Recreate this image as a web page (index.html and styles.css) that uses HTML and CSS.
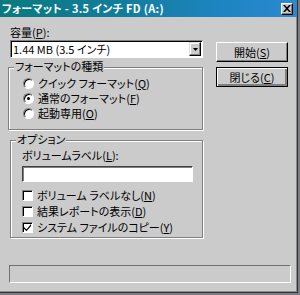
FILE: index.html
```html
<!doctype html>
<html>
<head>
<meta charset="utf-8">
<link rel="stylesheet" href="styles.css">
<title>フォーマット</title>
</head>
<body>
<div class="window">
  <div class="titlebar">
    <span class="title">フォーマット - 3.5 インチ FD (A:)</span>
    <span class="close">
      <svg width="8" height="7" viewBox="0 0 8 7"><path d="M0 0h2l2 2.2L6 0h2L5 3.5 8 7H6L4 4.8 2 7H0l3-3.5z" fill="#000"/></svg>
    </span>
  </div>
  <div class="content">
    <div class="main">
      <div class="left">
        <div class="label">容量(<u>P</u>):</div>
        <div class="combo">
          <span class="combo-text">1.44 MB (3.5 インチ)</span>
          <span class="drop"><svg width="5" height="3" viewBox="0 0 5 3"><path d="M0 0h5L2.5 3z" fill="#000"/></svg></span>
        </div>
        <div class="group type">
          <span class="group-title">フォーマットの種類</span>
          <div class="row"><span class="radio"></span>クイック フォーマット(<u>Q</u>)</div>
          <div class="row"><span class="radio on"></span>通常のフォーマット(<u>F</u>)</div>
          <div class="row"><span class="radio"></span>起動専用(<u>O</u>)</div>
        </div>
        <div class="group options">
          <span class="group-title">オプション</span>
          <div class="row plain">ボリュームラベル(<u>L</u>):</div>
          <div class="field"></div>
          <div class="checks">
            <div class="row"><span class="check"></span>ボリューム ラベルなし(<u>N</u>)</div>
            <div class="row"><span class="check"></span>結果レポートの表示(<u>D</u>)</div>
            <div class="row"><span class="check"><svg width="7" height="7" viewBox="0 0 7 7"><path d="M0 3l2.5 2.5L7 0v2L2.5 7.2 0 4.8z" fill="#000"/></svg></span>システム ファイルのコピー(<u>Y</u>)</div>
          </div>
        </div>
      </div>
      <div class="buttons">
        <div class="btn">開始(<u>S</u>)</div>
        <div class="btn default">閉じる(<u>C</u>)</div>
      </div>
    </div>
    <div class="status"></div>
  </div>
</div>
</body>
</html>
```

FILE: styles.css
```css
html,
body {
    margin: 0;
    padding: 0;
}
body {
    width: 300px;
    height: 295px;
    background: #7c7c84;
    font-family: "Noto Sans CJK JP", "Noto Sans", sans-serif;
    font-size: 11px;
    font-feature-settings: "palt";
    color: #000;
    overflow: hidden;
}
u {
    text-underline-offset: 1px;
}
.window {
    width: 297px;
    height: 292px;
    background: #cbcbcb;
    border-right: 1px solid #333;
    border-bottom: 1px solid #333;
    box-shadow: inset -1px -1px 0 #8a8a8a;
    display: flex;
    flex-direction: column;
}

/* title bar */
.titlebar {
    height: 17px;
    flex: none;
    display: flex;
    align-items: center;
    justify-content: space-between;
    padding: 0 4px 0 2px;
    background: linear-gradient(90deg, #087a7e 0%, #127c9c 40%, #1f84c2 75%, #2a8ad0 100%);
}
.title {
    color: #fff;
    font-weight: bold;
    font-size: 11px;
    letter-spacing: 0.3px;
    line-height: 17px;
    white-space: nowrap;
}
.close {
    width: 12px;
    height: 12px;
    box-sizing: border-box;
    background: #cbcbcb;
    border-top: 1px solid #fff;
    border-left: 1px solid #fff;
    border-right: 1px solid #000;
    border-bottom: 1px solid #000;
    box-shadow: inset -1px -1px 0 #808080;
    display: flex;
    align-items: center;
    justify-content: center;
}

/* body */
.content {
    flex: 1;
    display: flex;
    flex-direction: column;
    padding: 9px 0 9px 9px;
}
.main {
    display: flex;
}
.left {
    width: 194px;
    display: flex;
    flex-direction: column;
}
.label {
    height: 12px;
    line-height: 12px;
    padding-left: 1px;
    margin-bottom: 2px;
}
.combo {
    height: 18px;
    box-sizing: border-box;
    margin-left: 1px;
    background: #fff;
    border-top: 1px solid #808080;
    border-left: 1px solid #808080;
    border-right: 1px solid #fff;
    border-bottom: 1px solid #fff;
    box-shadow: inset 1px 1px 0 #000;
    display: flex;
    align-items: center;
    justify-content: space-between;
    padding: 1px 1px 1px 2px;
}
.combo-text {
    line-height: 14px;
}
.drop {
    width: 12px;
    height: 14px;
    box-sizing: border-box;
    background: #cbcbcb;
    border-top: 1px solid #dfdfdf;
    border-left: 1px solid #dfdfdf;
    border-right: 1px solid #000;
    border-bottom: 1px solid #000;
    box-shadow: inset -1px -1px 0 #808080, inset 1px 1px 0 #fff;
    display: flex;
    align-items: center;
    justify-content: center;
}

/* group boxes */
.group {
    position: relative;
    box-sizing: border-box;
    border: 1px solid #808080;
    box-shadow: 1px 1px 0 #fff, inset 1px 1px 0 #fff;
}
.group-title {
    position: absolute;
    top: -8px;
    left: 5px;
    padding: 0 1px;
    background: #cbcbcb;
    line-height: 12px;
}
.type {
    margin-top: 9px;
    margin-left: -1px;
    height: 63px;
    padding: 8px 0 0 14px;
}
.options {
    margin-top: 10px;
    height: 98px;
    margin-left: 1px;
    padding: 7px 0 0 11px;
}
.row {
    height: 15px;
    line-height: 15px;
    display: flex;
    align-items: center;
    white-space: nowrap;
}
.radio {
    width: 11px;
    height: 11px;
    box-sizing: border-box;
    margin-right: 4px;
    border-radius: 50%;
    background: #fff;
    border: 1px solid;
    border-color: #808080 #fff #fff #808080;
    box-shadow: inset 1px 1px 0 #000;
    display: flex;
    align-items: center;
    justify-content: center;
}
.radio.on::after {
    content: "";
    width: 3px;
    height: 3px;
    border-radius: 50%;
    background: #000;
}
.field {
    width: 171px;
    height: 16px;
    box-sizing: border-box;
    margin-top: 3px;
    background: #fff;
    border: 1px solid;
    border-color: #404040 #fff #fff #404040;
    box-shadow: inset 1px 1px 0 #808080;
}
.checks {
    margin-top: 6px;
    display: flex;
    flex-direction: column;
    gap: 1px;
}
.check {
    width: 11px;
    height: 11px;
    box-sizing: border-box;
    margin-right: 4px;
    background: #fff;
    border: 1px solid;
    border-color: #808080 #fff #fff #808080;
    box-shadow: inset 1px 1px 0 #000;
    display: flex;
    align-items: center;
    justify-content: center;
}

/* buttons */
.buttons {
    margin: 16px 0 0 13px;
    display: flex;
    flex-direction: column;
    gap: 5px;
}
.btn {
    width: 72px;
    height: 20px;
    box-sizing: border-box;
    border: 1px solid;
    border-color: #fff #000 #000 #fff;
    box-shadow: inset -1px -1px 0 #808080;
    text-align: center;
    line-height: 18px;
}
.btn.default {
    border-color: #000;
    box-shadow: inset 1px 1px 0 #fff, inset -2px -2px 0 #808080;
}

/* status */
.status {
    margin-top: auto;
    width: 282px;
    height: 18px;
    box-sizing: border-box;
    border: 1px solid;
    border-color: #707070 #fff #fff #707070;
}
```
